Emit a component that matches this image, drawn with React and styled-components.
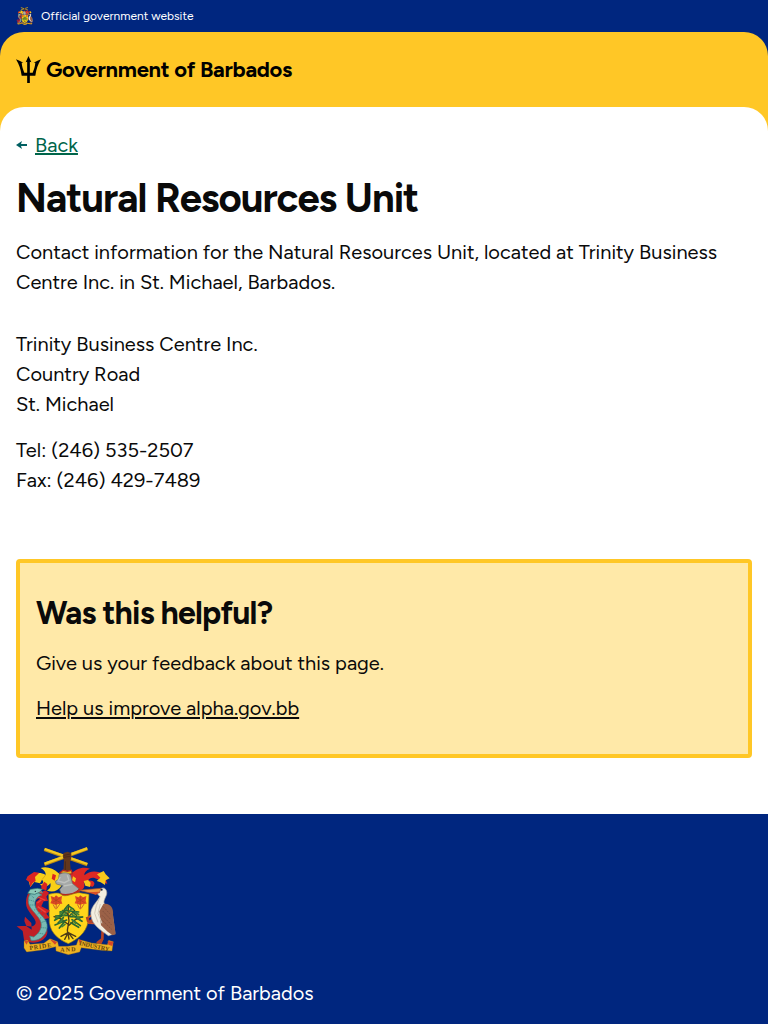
import React from 'react';
import styled, { createGlobalStyle } from 'styled-components';

const navy = '#00267f';
const gold = '#ffc726';
const ink = '#0a0a0a';

const GlobalStyle = createGlobalStyle`
  * { box-sizing: border-box; }
  body {
    margin: 0;
    background: #fff;
    color: ${ink};
    font-family: Figtree, Lato, "Liberation Sans", sans-serif;
    font-size: 20px;
    line-height: 30px;
  }
`;

const OfficialBar = styled.div`
  display: flex;
  align-items: center;
  gap: 8px;
  height: 32px;
  padding: 0 16px;
  background: ${navy};
  color: #fff;
  font-size: 12px;
  line-height: 18px;
`;

const HeaderBackdrop = styled.div`
  background: ${navy};
`;

const Header = styled.header`
  display: flex;
  align-items: center;
  gap: 5px;
  height: 75px;
  padding: 0 16px;
  background: ${gold};
  border-radius: 24px 24px 0 0;
  color: #000;
`;

const Brand = styled.span`
  font-size: 22px;
  font-weight: 700;
  line-height: 28px;
  letter-spacing: -0.3px;
`;

const MainBackdrop = styled.div`
  background: ${gold};
`;

const Main = styled.main`
  height: 707px;
  padding: 23px 16px 0;
  background: #fff;
  border-radius: 24px 24px 0 0;
`;

const BackLink = styled.a`
  display: flex;
  align-items: center;
  gap: 8px;
  width: max-content;
  color: #00654a;
`;

const Underlined = styled.span`
  text-decoration: underline;
  text-decoration-thickness: 2px;
  text-underline-offset: ${(p) => p.$offset || '2px'};
`;

const Title = styled.h1`
  margin: 15px 0 0;
  font-size: 40px;
  font-weight: 700;
  line-height: 46px;
  letter-spacing: -0.025em;
`;

const Paragraph = styled.p`
  margin: ${(p) => p.$top || '16px'} 0 0;
`;

const Line = styled.span`
  display: block;
`;

const Feedback = styled.section`
  height: 199px;
  margin-top: 64px;
  padding: 30px 16px 0;
  background: #ffe9a8;
  border: 4px solid ${gold};
  border-radius: 4px;
`;

const FeedbackTitle = styled.h2`
  margin: 0;
  font-size: 32px;
  font-weight: 700;
  line-height: 40px;
  letter-spacing: -0.025em;
`;

const Footer = styled.footer`
  height: 210px;
  padding: 32px 16px 0;
  background: ${navy};
  color: #fff;
`;

const EmblemSvg = styled.svg`
  display: block;
  flex: none;
`;

function Emblem({ width, height }) {
  return (
    <EmblemSvg width={width} height={height} viewBox="48 18 303 327" aria-hidden="true">
      <path d="M133 28 262 74M133 73 262 26" stroke="#b98a16" strokeWidth="10" />
      <path d="M134 27 262 72M134 71 262 25" stroke="#f3c822" strokeWidth="7" />
      <path d="M190 98 192 61 188 48 191 39 203 35 214 40 214 54 210 66 213 98Z" fill="#62371d" />
      <path d="M192 46 211 42M191 52 211 49M196 64 196 90" stroke="#3f2316" strokeWidth="2" fill="none" />
      {/* mantling */}
      <path d="M175 99C159 84 139 78 122 84 132 90 138 96 137 105 119 94 99 100 83 111L91 141 103 126 120 130 126 119C134 127 128 133 119 133 133 145 145 139 151 129 154 141 148 149 140 151 156 159 175 153 184 138L190 109Z" fill="#f9cf18" />
      <path d="M83 109 102 96 118 98 105 111 107 123 98 129 91 142 88 126 78 119ZM133 125 142 132 139 151 124 147 124 138ZM158 101 168 106 164 122 155 116Z" fill="#dc2422" />
      <path d="M137 105 126 119" stroke="#c8931a" strokeWidth="2" />
      <path d="M213 103C226 88 246 79 270 86 258 91 252 98 253 106 269 91 293 91 313 104L322 132 308 125 293 118C280 109 268 113 264 122 280 118 290 130 278 140L264 137 251 127C258 142 247 154 235 151L211 132Z" fill="#dd2824" />
      <path d="M291 103 311 93 317 103 329 115 317 121 315 135 302 127 290 123 301 113ZM251 123 264 120 272 128 270 141 256 137ZM219 109 228 115 225 127 216 121Z" fill="#f7c81c" />
      {/* helmet */}
      <path d="M180 98 189 91 202 94 214 91 217 101 199 105Z" fill="#e8b81d" stroke="#b62820" strokeWidth="4" />
      <path d="M177 104C190 96 205 97 212 106L217 130 237 147 225 160 185 165 179 149 188 137 169 132 166 124 176 118Z" fill="#a5a8a7" stroke="#686d69" strokeWidth="2" />
      <path d="M181 111 174 123 193 128 207 121 202 106M191 138 217 133" fill="none" stroke="#bfc2bf" strokeWidth="4" />
      <path d="M181 159C198 166 223 160 238 146L240 155C225 169 198 173 181 168Z" fill="#ba251f" />
      {/* shield */}
      <path d="M146 163C164 159 178 156 187 166 203 171 221 158 238 158L267 163 264 247C258 279 231 299 205 311 178 299 153 282 148 248Z" fill="#ffd51b" stroke="#8b711a" strokeWidth="2" />
      {[0, 73].map((x) => (
        <g key={x} transform={`translate(${x} 0)`} fill="#df4924">
          <path d="M152 168 163 172 168 166 176 172 186 168 184 182 187 191 174 192 168 195 160 192 151 190 155 181Z" />
          <path d="M159 193 166 206M169 194 168 208M180 191 170 206" stroke="#ce6929" strokeWidth="3" />
          <path d="M157 174 181 188M181 173 158 187M168 169V193" stroke="#a8421b" strokeWidth="2" />
        </g>
      ))}
      <g fill="none" strokeLinecap="round">
        <path d="M206 194 204 220 207 242 202 271 207 297M204 253 181 236 162 230M207 256 226 239 247 231M204 224 188 211M207 229 224 211M204 278 183 289M205 278 227 289M204 279 194 298M206 279 219 296" stroke="#4c3b16" strokeWidth="4" />
        <path d="M204 196 193 209M208 199 221 208M202 211 180 216M207 213 236 216M191 217 178 230M217 215 230 226M203 226 167 228M210 230 248 231M184 229 164 241M221 229 246 244M190 233 174 249M216 239 241 257M200 240 165 255M213 248 236 262M193 246 178 264" stroke="#286833" strokeWidth="5" />
        <path d="M203 200 199 208M214 206 208 217M187 214 180 222M226 216 236 224M177 231 167 235M231 233 240 239M188 238 179 248M199 218 191 226M214 222 222 228M195 253 186 260M218 241 227 250" stroke="#3f7f3b" strokeWidth="5" />
      </g>
      {/* dolphin */}
      <path d="M121 158 136 151 147 158 139 170 144 183 131 184 124 199 150 212 139 221 149 234 124 239 105 220 108 186 120 176Z" fill="#ce2025" />
      <path d="M121 151C101 137 78 155 78 188 77 214 111 235 107 250 101 264 88 259 79 257L50 259 68 273 72 299C91 313 122 311 137 291 157 265 117 235 107 213 96 190 109 175 119 175ZM75 230 94 249 95 269 79 258 73 243Z" fill="#c12128" />
      <path d="M121 150C105 140 86 157 85 181 83 204 111 222 120 240 130 259 120 278 101 291L89 288 93 301C119 306 146 281 141 253 136 229 107 217 105 195 103 179 113 169 126 165L116 160 129 158Z" fill="#79bab3" stroke="#3b8886" strokeWidth="2" />
      <path d="M91 164 104 176M88 180 103 184M91 195 107 195M103 210 114 203M113 222 125 213M121 234 134 225M125 247 140 242M124 263 140 264M115 279 130 282" stroke="#3e8485" strokeWidth="3" strokeDasharray="3 3" />
      <path d="M112 155 125 157M114 171 136 181M112 189 124 180M113 200 137 217" stroke="#f04139" strokeWidth="4" />
      <path d="M83 160 91 148 112 145 128 148 118 157 104 163Z" fill="#8bcbb9" stroke="#246b69" strokeWidth="2" />
      <circle cx="106" cy="154" r="2" fill="#161f32" />
      {/* pelican */}
      <path d="M278 224 263 234 267 249 284 250" fill="none" stroke="#cc5430" strokeWidth="6" />
      <path d="M265 246 261 231M267 249 281 236M308 270 307 297 291 310M307 297 299 314" fill="none" stroke="#b74225" strokeWidth="8" />
      <path d="M298 151C308 136 323 147 320 163 315 177 307 186 316 196L337 220 345 281 325 287C302 271 276 255 273 226 269 203 290 187 300 170L290 159Z" fill="#f3eee0" stroke="#b3aa9d" strokeWidth="2" />
      <path d="M310 192C330 188 342 204 339 226L347 283 338 286 323 275 303 256 298 214Z" fill="#9b6147" />
      <path d="M309 199 329 221M308 213 333 239M306 226 335 255M307 241 335 268" stroke="#75483a" strokeWidth="2" strokeDasharray="6 3" />
      <path d="M300 171 289 197 284 220 294 247M301 192 294 220 306 250" fill="none" stroke="#d1cabc" strokeWidth="3" />
      <path d="M303 145 235 151 271 159 298 159Z" fill="#ef983c" stroke="#a04a2a" strokeWidth="2" />
      <path d="M265 157 299 155 288 165Z" fill="#d74e27" />
      <circle cx="305" cy="149" r="3" fill="#202b3c" />
      {/* motto ribbon */}
      <path d="M72 302 83 300 90 313 131 310 150 296 173 305 176 319 203 319 229 315 235 298 275 309 322 314 326 301 340 305 336 333 303 331 244 323 239 336 205 344 168 333 167 320 132 329 80 336 72 324Z" fill="#efb222" stroke="#8b6313" strokeWidth="1" />
      <path d="M72 302 85 302 80 314ZM149 297 171 306 165 314ZM235 298 246 302 240 313ZM323 303 340 305 337 318 325 314Z" fill="#d64728" />
      <g fill="#61420d" fontFamily="Liberation Serif, serif" fontWeight="700" fontSize="18">
        <text x="89" y="330" textLength="66" transform="rotate(-8 89 330)">PRIDE</text>
        <text x="181" y="335" textLength="46" transform="rotate(-2 181 335)">AND</text>
        <text x="237" y="315" textLength="91" transform="rotate(12 237 315)">INDUSTRY</text>
      </g>
    </EmblemSvg>
  );
}

function Trident() {
  return (
    <EmblemSvg width="25" height="27" viewBox="48 168 75 81" aria-hidden="true">
      <path d="M85.500 168 94 187 89.500 185V218H98C102 208 105 199 106 188L101 188C109 184 116 181 123 178 113 194 109 208 106 227H89.500V249H81.500V227H65C62 208 58 194 48 178 55 181 62 184 70 188L65 188C66 199 69 208 73 218H81.500V185L77 187Z" />
    </EmblemSvg>
  );
}

function BackArrow() {
  return (
    <EmblemSvg width="11" height="8" viewBox="0 0 11 8" aria-hidden="true">
      <path d="M0 4 6 0 5 3H11V5H5L6 8Z" fill="#005f61" />
    </EmblemSvg>
  );
}

export default function App() {
  return (
    <>
      <GlobalStyle />
      <OfficialBar>
        <Emblem width={17} height={18} />
        <span>Official government website</span>
      </OfficialBar>
      <HeaderBackdrop>
        <Header>
          <Trident />
          <Brand>Government of Barbados</Brand>
        </Header>
      </HeaderBackdrop>
      <MainBackdrop>
        <Main>
          <BackLink>
            <BackArrow />
            <Underlined $offset="1px">Back</Underlined>
          </BackLink>
          <Title>Natural Resources Unit</Title>
          <Paragraph>
            Contact information for the Natural Resources Unit, located at Trinity Business
            <br />
            Centre Inc. in St. Michael, Barbados.
          </Paragraph>
          <Paragraph $top="32px">
            <Line>Trinity Business Centre Inc.</Line>
            <Line>Country Road</Line>
            <Line>St. Michael</Line>
          </Paragraph>
          <Paragraph>
            <Line>Tel: (246) 535-2507</Line>
            <Line>Fax: (246) 429-7489</Line>
          </Paragraph>
          <Feedback>
            <FeedbackTitle>Was this helpful?</FeedbackTitle>
            <Paragraph $top="15px">Give us your feedback about this page.</Paragraph>
            <Paragraph $top="15px">
              <Underlined>Help us improve alpha.gov.bb</Underlined>
            </Paragraph>
          </Feedback>
        </Main>
      </MainBackdrop>
      <Footer>
        <Emblem width={101} height={109} />
        <Paragraph $top="23px">© 2025 Government of Barbados</Paragraph>
      </Footer>
    </>
  );
}
